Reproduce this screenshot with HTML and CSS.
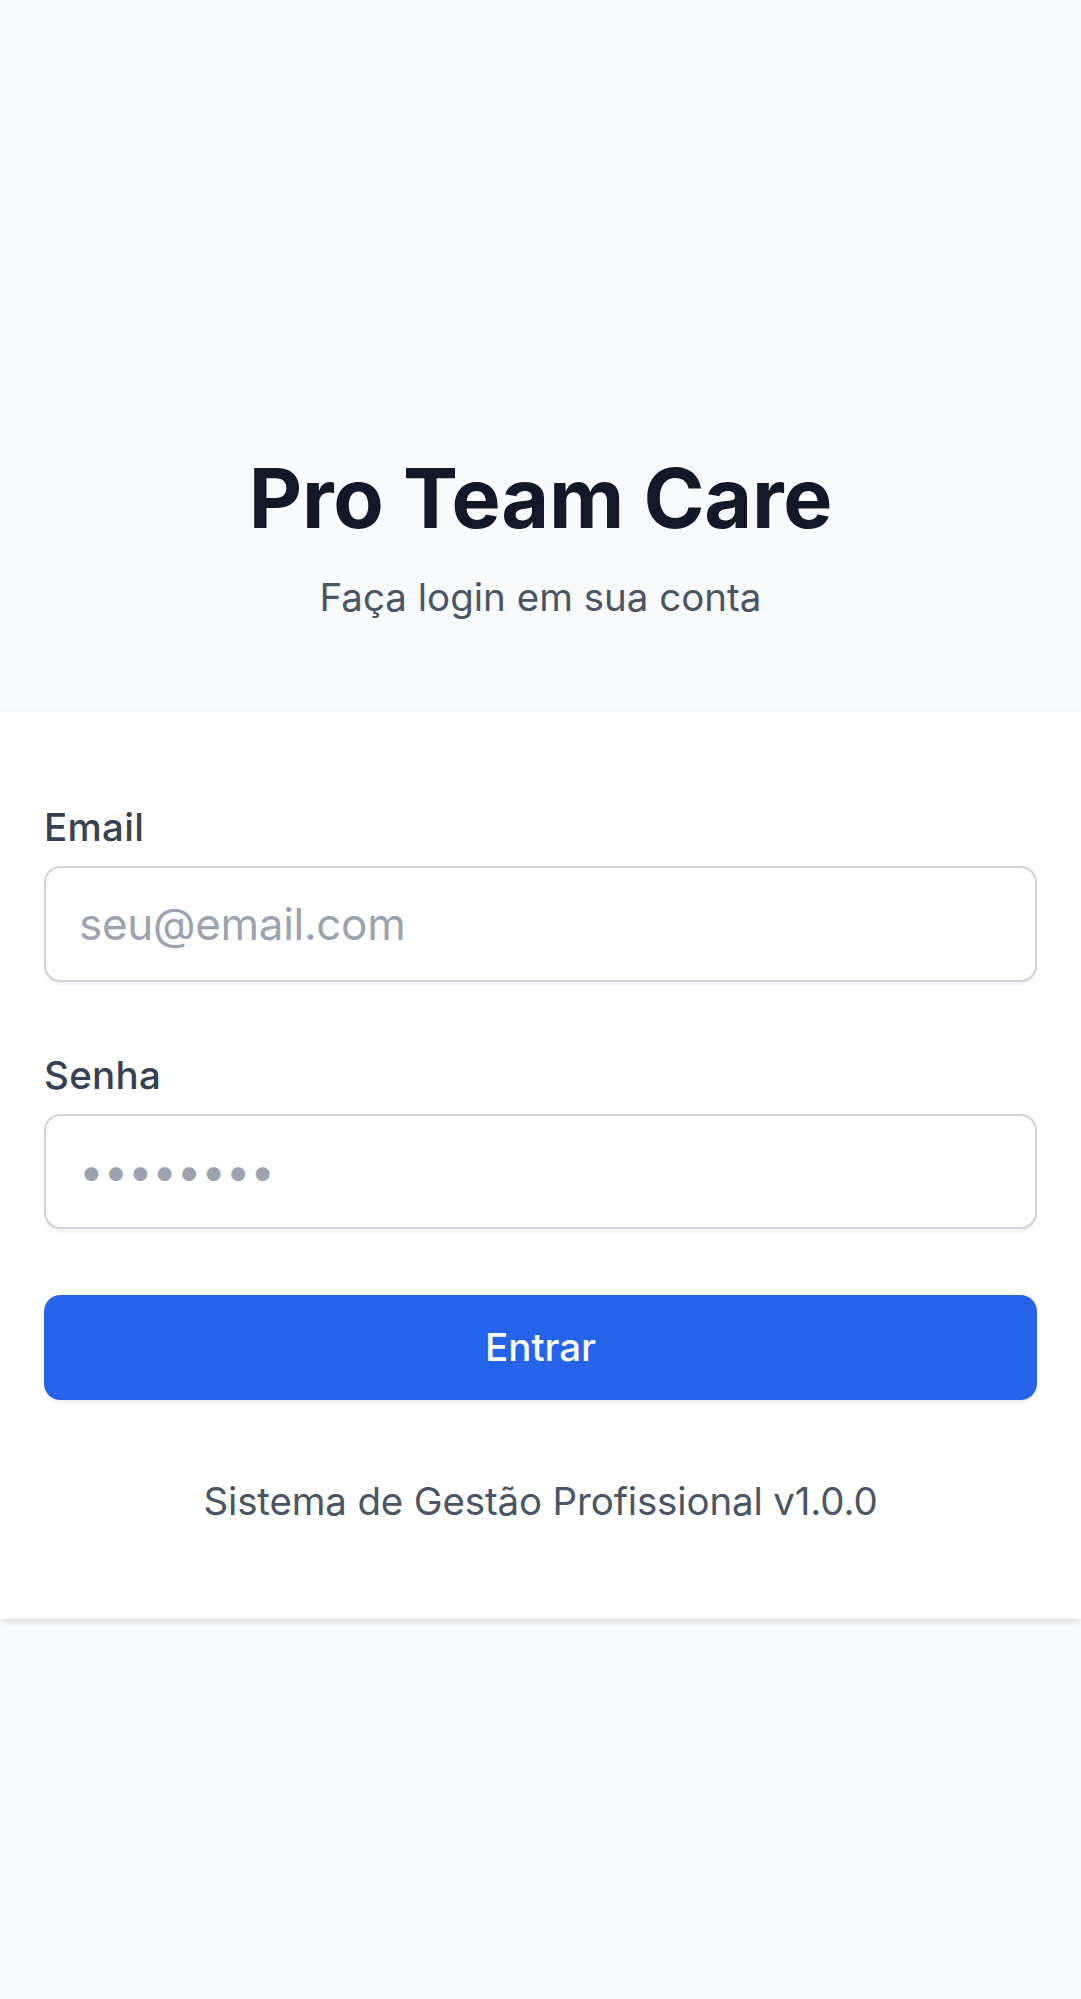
FILE: index.html
```html
<!DOCTYPE html>
<html lang="pt-BR">
<head>
<meta charset="utf-8">
<title>Pro Team Care</title>
<link rel="stylesheet" href="styles.css">
</head>
<body>
<main class="page">
  <header class="head">
    <h1 class="title">Pro Team Care</h1>
    <p class="subtitle">Faça login em sua conta</p>
  </header>
  <section class="card">
    <form class="form">
      <div class="field">
        <label class="label" for="email">Email</label>
        <input class="input" id="email" type="email" placeholder="seu@email.com">
      </div>
      <div class="field">
        <label class="label" for="senha">Senha</label>
        <input class="input" id="senha" type="password" placeholder="••••••••">
      </div>
      <button class="btn" type="button">Entrar</button>
    </form>
    <p class="foot">Sistema de Gestão Profissional v1.0.0</p>
  </section>
</main>
</body>
</html>
```
FILE: styles.css
```css
* { box-sizing: border-box; }
html, body { margin: 0; padding: 0; }
body {
  background: #f9fafb;
  font-family: Inter, "Noto Sans", sans-serif;
  min-height: 1999px;
}
.page {
  padding-top: 449px;
  display: flex;
  flex-direction: column;
}
.head { text-align: center; }
.title {
  margin: 0;
  font-size: 82.5px;
  line-height: 99px;
  font-weight: 700;
  color: #111827;
  letter-spacing: -0.2px;
}
.subtitle {
  margin: 22px 0 0;
  font-size: 38.5px;
  line-height: 55px;
  color: #4b5563;
}
.card {
  margin-top: 87px;
  background: #fff;
  padding: 88px 44px 90px;
  box-shadow: 0 2.75px 8.25px rgba(0,0,0,0.1), 0 2.75px 5.5px -2.75px rgba(0,0,0,0.1);
}
.form {
  display: flex;
  flex-direction: column;
  gap: 66px;
}
.field { display: flex; flex-direction: column; gap: 11px; }
.label {
  font-size: 38.5px;
  line-height: 55px;
  font-weight: 500;
  color: #374151;
  letter-spacing: 0.3px;
}
.input {
  height: 115.5px;
  width: 100%;
  border: 2.75px solid #d1d5db;
  border-radius: 16.5px;
  padding: 0 33px;
  font-family: Inter, "Noto Sans", sans-serif;
  font-size: 44px;
  line-height: 66px;
  color: #111827;
  background: #fff;
  box-shadow: 0 2.75px 2.75px rgba(0,0,0,0.05);
  outline: none;
  letter-spacing: -0.3px;
}
.input::placeholder { color: #9ca3af; opacity: 1; }
.btn {
  height: 104.5px;
  width: 100%;
  border: 0;
  border-radius: 16.5px;
  background: #2563eb;
  color: #fff;
  font-family: Inter, "Noto Sans", sans-serif;
  font-size: 38.5px;
  font-weight: 500;
  box-shadow: 0 2.75px 2.75px rgba(0,0,0,0.05);
}
.foot {
  margin: 74px 0 0;
  text-align: center;
  font-size: 38.5px;
  line-height: 55px;
  color: #4b5563;
  letter-spacing: -0.15px;
}
```
